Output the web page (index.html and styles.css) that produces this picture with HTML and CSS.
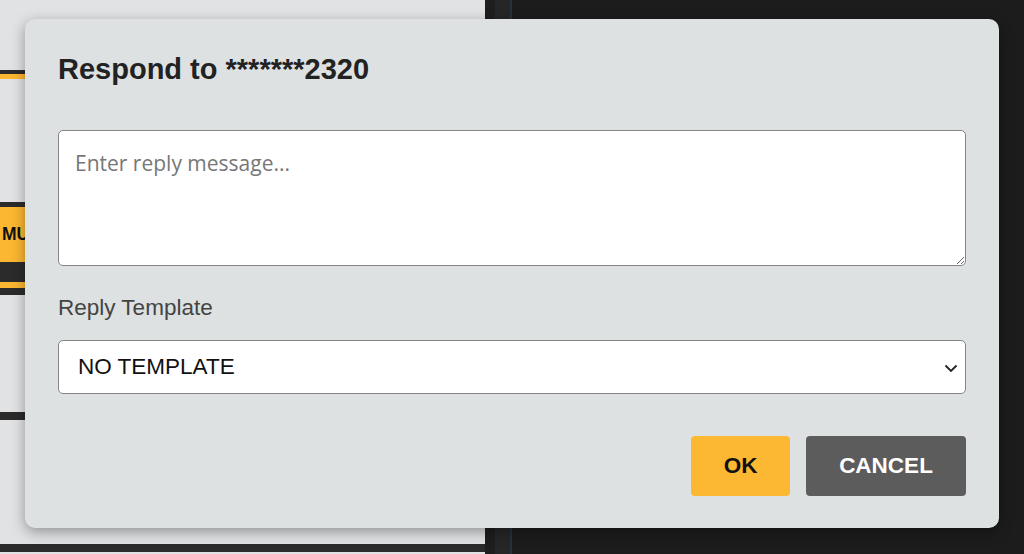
FILE: index.html
```html
<!DOCTYPE html>
<html>
<head>
<meta charset="utf-8">
<link rel="stylesheet" href="styles.css">
</head>
<body>
<div class="page">
  <div class="left-panel">
    <div class="band band-a"></div>
    <div class="band band-b"><span class="mu">MULTI</span></div>
    <div class="band band-c"></div>
    <div class="band band-d"></div>
  </div>
  <div class="divider"><div class="div-a"></div><div class="div-b"></div><div class="div-line"></div></div>
  <div class="right-panel"></div>
</div>

<div class="modal">
  <h2 class="title">Respond to *******2320</h2>
  <textarea class="message" placeholder="Enter reply message..."></textarea>
  <label class="label">Reply Template</label>
  <div class="select">
    <span>NO TEMPLATE</span>
    <svg class="chev" width="14" height="9" viewBox="0 0 14 9"><path d="M1.5 1.5 L7 7 L12.5 1.5" fill="none" stroke="#222" stroke-width="1.8"/></svg>
  </div>
  <div class="actions">
    <button class="btn ok">OK</button>
    <button class="btn cancel">CANCEL</button>
  </div>
</div>
</body>
</html>
```
FILE: styles.css
```css
* { box-sizing: border-box; }
html, body { margin: 0; padding: 0; }
body {
  width: 1024px;
  height: 554px;
  overflow: hidden;
  background: #1c1c1c;
  font-family: "Liberation Sans", Arial, sans-serif;
}
.page {
  display: flex;
  height: 554px;
}
.left-panel {
  width: 485px;
  background: #e0e2e3;
  display: flex;
  flex-direction: column;
}
.band { width: 100%; }
.band-a {
  margin-top: 70px;
  height: 9px;
  border-top: 4px solid #2b2b2b;
  background: #fbb731;
}
.band-b {
  margin-top: 123px;
  height: 93px;
  background: #2b2b2b;
  padding-top: 5px;
}
.band-b .mu {
  display: flex;
  align-items: center;
  background: #fbb731;
  font-weight: bold;
  font-size: 17.5px;
  color: #111;
  padding-left: 2px;
  overflow: hidden;
  border-bottom: 20px solid #2b2b2b;
  height: 75px;
  box-shadow: 0 6px 0 #fbb731;
}
.band-c {
  margin-top: 117px;
  height: 8px;
  background: #2b2b2b;
}
.band-d {
  margin-top: 124px;
  height: 8px;
  background: #2b2b2b;
}
.divider {
  width: 27px;
  display: flex;
}
.div-a { width: 10px; background: #1e1e1e; }
.div-b { width: 15px; background: #262626; }
.div-line { width: 2px; background: #25333c; }
.right-panel { flex: 1; background: #1c1c1c; }

.modal {
  position: absolute;
  left: 25px;
  top: 19px;
  width: 974px;
  height: 509px;
  background: #dee1e2;
  border-radius: 10px;
  box-shadow: 0 4px 14px rgba(0,0,0,0.35);
  padding: 34px 33px 32px 33px;
  display: flex;
  flex-direction: column;
}
.title {
  margin: 0;
  font-size: 29px;
  font-weight: bold;
  color: #222;
  line-height: 32px;
}
.message {
  margin-top: 45px;
  width: 908px;
  height: 136px;
  border: 1px solid #858585;
  border-radius: 5px;
  background: #fff;
  padding: 18px 16px;
  font-family: "Open Sans", "Noto Sans", sans-serif;
  font-size: 21px;
  resize: vertical;
  outline: none;
}
.message::placeholder { color: #777; }
.label {
  margin-top: 30px;
  font-size: 22.5px;
  color: #444;
  line-height: 24px;
}
.select {
  margin-top: 20px;
  height: 54px;
  border: 1px solid #858585;
  border-radius: 5px;
  background: #fff;
  display: flex;
  align-items: center;
  justify-content: space-between;
  padding: 0 7px 0 19px;
  font-size: 22.5px;
  color: #111;
}
.chev { margin-top: 2px; }
.actions {
  margin-top: 42px;
  display: flex;
  justify-content: flex-end;
  gap: 16px;
}
.btn {
  height: 60px;
  border: none;
  border-radius: 4px;
  font-family: "Liberation Sans", Arial, sans-serif;
  font-weight: bold;
  font-size: 22.5px;
  padding: 0;
}
.ok { width: 99px; background: #fdb833; color: #111; }
.cancel { width: 160px; background: #5c5c5c; color: #fff; }
```
